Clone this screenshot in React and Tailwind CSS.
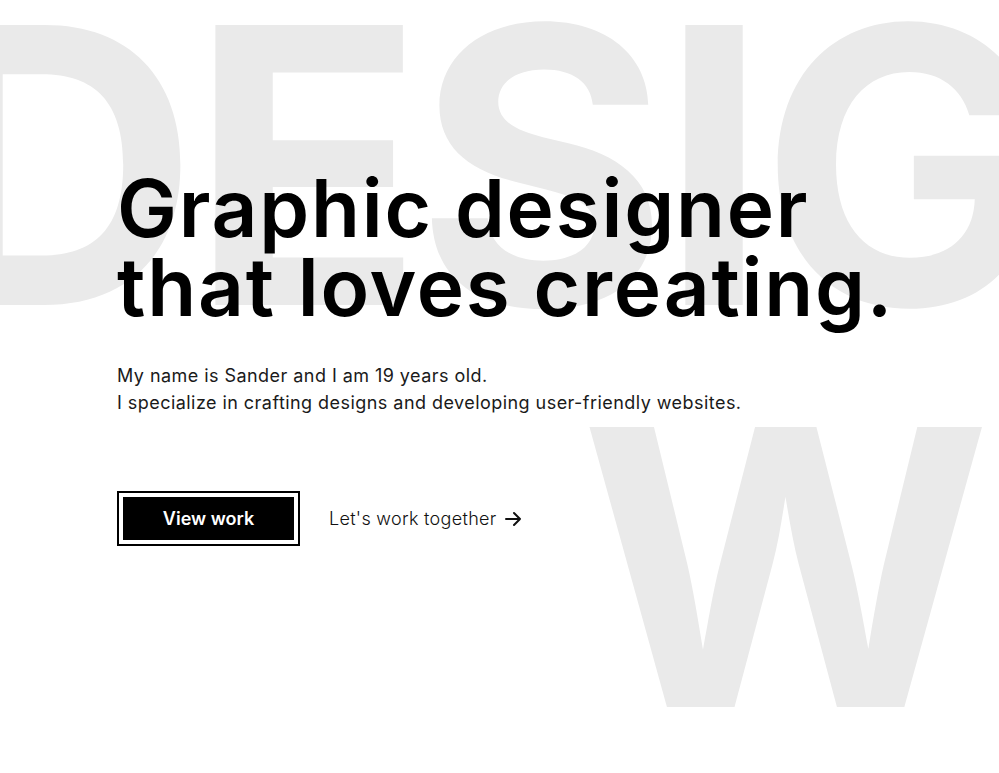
import React from "react";

export default function App() {
  return (
    <div className="relative w-[999px] h-[773px] overflow-hidden bg-white" style={{ fontFamily: "Inter, 'Noto Sans', sans-serif" }}>
      <div aria-hidden="true" className="absolute left-[-80px] top-[-27px] text-[385px] leading-none font-bold text-[#eaeaea] whitespace-nowrap select-none tracking-[-8px]">
        DESIGN
      </div>
      <div aria-hidden="true" className="absolute left-[580px] top-[375px] text-[385px] leading-none font-bold text-[#eaeaea] whitespace-nowrap select-none origin-left scale-x-[1.03]">
        W
      </div>
      <div className="relative pl-[117px] pt-[168px]">
        <h1 className="text-[80px] leading-[79px] font-semibold text-black tracking-[1.8px]">
          Graphic designer<br />that loves creating.
        </h1>
        <p className="mt-[36px] text-[18px] leading-[27px] text-[#1a1a1a] tracking-[0.45px]">
          My name is Sander and I am 19 years old.<br />
          I specialize in crafting designs and developing user-friendly websites.
        </p>
        <div className="mt-[75px] flex items-center gap-[29px]">
          <div className="border-2 border-black p-[4px]">
            <button className="w-[171px] h-[43px] bg-black text-white text-[18px] font-semibold">View work</button>
          </div>
          <a className="flex items-center gap-[7px] text-[18px] font-light text-[#111] tracking-[0.3px]">
            Let's work together
            <svg width="18" height="18" viewBox="0 0 18 18" fill="none" stroke="currentColor" strokeWidth="2" strokeLinecap="round" strokeLinejoin="round"><path d="M2 9h14M10 3l6 6-6 6" /></svg>
          </a>
        </div>
      </div>
    </div>
  );
}
